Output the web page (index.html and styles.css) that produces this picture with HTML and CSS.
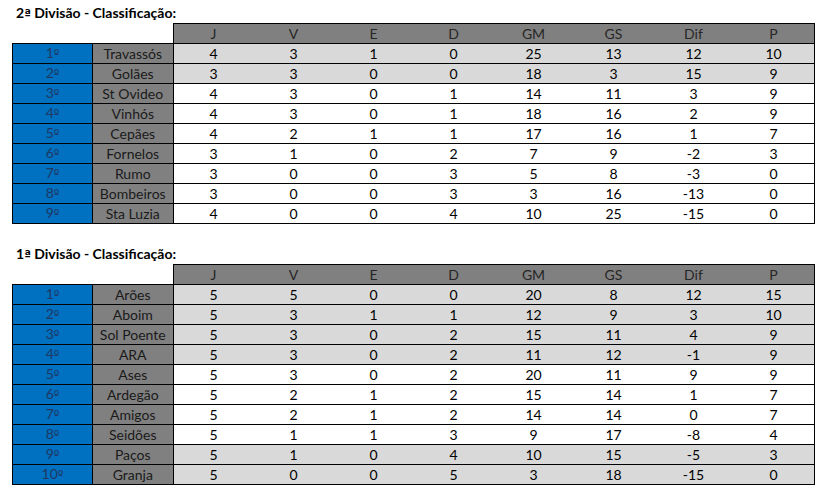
FILE: index.html
```html
<!DOCTYPE html>
<html>
<head>
<meta charset="utf-8">
<link rel="stylesheet" href="styles.css">
</head>
<body>
<div class="sheet">
  <div class="title">2<span class="ord">ª</span> Divisão - Classificação:</div>
  <table class="standings">
    <tr class="head"><td class="blank"></td><td class="blank"></td><td class="first">J</td><td>V</td><td>E</td><td>D</td><td>GM</td><td>GS</td><td>Dif</td><td class="last">P</td></tr>
    <tr class="grey top"><td class="pos">1<span class="ord">º</span></td><td class="name">Travassós</td><td>4</td><td>3</td><td>1</td><td>0</td><td>25</td><td>13</td><td>12</td><td class="last">10</td></tr>
    <tr class="grey"><td class="pos">2<span class="ord">º</span></td><td class="name">Golães</td><td>3</td><td>3</td><td>0</td><td>0</td><td>18</td><td>3</td><td>15</td><td class="last">9</td></tr>
    <tr><td class="pos">3<span class="ord">º</span></td><td class="name">St Ovideo</td><td>4</td><td>3</td><td>0</td><td>1</td><td>14</td><td>11</td><td>3</td><td class="last">9</td></tr>
    <tr><td class="pos">4<span class="ord">º</span></td><td class="name">Vinhós</td><td>4</td><td>3</td><td>0</td><td>1</td><td>18</td><td>16</td><td>2</td><td class="last">9</td></tr>
    <tr><td class="pos">5<span class="ord">º</span></td><td class="name">Cepães</td><td>4</td><td>2</td><td>1</td><td>1</td><td>17</td><td>16</td><td>1</td><td class="last">7</td></tr>
    <tr><td class="pos">6<span class="ord">º</span></td><td class="name">Fornelos</td><td>3</td><td>1</td><td>0</td><td>2</td><td>7</td><td>9</td><td>-2</td><td class="last">3</td></tr>
    <tr><td class="pos">7<span class="ord">º</span></td><td class="name">Rumo</td><td>3</td><td>0</td><td>0</td><td>3</td><td>5</td><td>8</td><td>-3</td><td class="last">0</td></tr>
    <tr><td class="pos">8<span class="ord">º</span></td><td class="name">Bombeiros</td><td>3</td><td>0</td><td>0</td><td>3</td><td>3</td><td>16</td><td>-13</td><td class="last">0</td></tr>
    <tr><td class="pos">9<span class="ord">º</span></td><td class="name">Sta Luzia</td><td>4</td><td>0</td><td>0</td><td>4</td><td>10</td><td>25</td><td>-15</td><td class="last">0</td></tr>
  </table>

  <div class="title second">1<span class="ord">ª</span> Divisão - Classificação:</div>
  <table class="standings">
    <tr class="head"><td class="blank"></td><td class="blank"></td><td class="first">J</td><td>V</td><td>E</td><td>D</td><td>GM</td><td>GS</td><td>Dif</td><td class="last">P</td></tr>
    <tr class="grey top"><td class="pos">1<span class="ord">º</span></td><td class="name">Arões</td><td>5</td><td>5</td><td>0</td><td>0</td><td>20</td><td>8</td><td>12</td><td class="last">15</td></tr>
    <tr class="grey"><td class="pos">2<span class="ord">º</span></td><td class="name">Aboim</td><td>5</td><td>3</td><td>1</td><td>1</td><td>12</td><td>9</td><td>3</td><td class="last">10</td></tr>
    <tr class="grey"><td class="pos">3<span class="ord">º</span></td><td class="name">Sol Poente</td><td>5</td><td>3</td><td>0</td><td>2</td><td>15</td><td>11</td><td>4</td><td class="last">9</td></tr>
    <tr class="grey"><td class="pos">4<span class="ord">º</span></td><td class="name">ARA</td><td>5</td><td>3</td><td>0</td><td>2</td><td>11</td><td>12</td><td>-1</td><td class="last">9</td></tr>
    <tr><td class="pos">5<span class="ord">º</span></td><td class="name">Ases</td><td>5</td><td>3</td><td>0</td><td>2</td><td>20</td><td>11</td><td>9</td><td class="last">9</td></tr>
    <tr><td class="pos">6<span class="ord">º</span></td><td class="name">Ardegão</td><td>5</td><td>2</td><td>1</td><td>2</td><td>15</td><td>14</td><td>1</td><td class="last">7</td></tr>
    <tr><td class="pos">7<span class="ord">º</span></td><td class="name">Amigos</td><td>5</td><td>2</td><td>1</td><td>2</td><td>14</td><td>14</td><td>0</td><td class="last">7</td></tr>
    <tr><td class="pos">8<span class="ord">º</span></td><td class="name">Seidões</td><td>5</td><td>1</td><td>1</td><td>3</td><td>9</td><td>17</td><td>-8</td><td class="last">4</td></tr>
    <tr class="grey"><td class="pos">9<span class="ord">º</span></td><td class="name">Paços</td><td>5</td><td>1</td><td>0</td><td>4</td><td>10</td><td>15</td><td>-5</td><td class="last">3</td></tr>
    <tr class="grey"><td class="pos">10<span class="ord">º</span></td><td class="name">Granja</td><td>5</td><td>0</td><td>0</td><td>5</td><td>3</td><td>18</td><td>-15</td><td class="last">0</td></tr>
  </table>
</div>
</body>
</html>
```

FILE: styles.css
```css
html, body {
  margin: 0;
  padding: 0;
  background: #ffffff;
}

.sheet {
  padding: 3px 0 0 12px;
  font-family: "Lato", "Open Sans", sans-serif;
  font-size: 14px;
  color: #000;
}

.ord {
  font-family: "DejaVu Sans", sans-serif;
  font-size: 0.85em;
}

.title {
  font-family: "Lato", "Open Sans", sans-serif;
  font-weight: bold;
  font-size: 14px;
  padding-left: 4px;
  height: 20px;
  line-height: 20px;
  color: #000;
}

.title.second {
  margin-top: 20px;
}

.standings {
  border-collapse: collapse;
  table-layout: fixed;
  width: 801px;
}

.standings td {
  width: 80px;
  height: 19px;
  padding: 0;
  text-align: center;
  line-height: 18px;
  border-bottom: 1px solid #000;
  background: #fff;
  white-space: nowrap;
  overflow: hidden;
}

.standings tr.grey td {
  background: #d9d9d9;
}

.standings tr.head td {
  background: #808080;
  color: #262626;
  border-top: 1px solid #000;
}

.standings tr.head td.blank {
  background: transparent;
  border: none;
}

.standings tr.head td.first {
  border-left: 1px solid #000;
}

.standings tr.top td.pos,
.standings tr.top td.name {
  border-top: 1px solid #000;
}

.standings td.last {
  border-right: 1px solid #000;
}

.standings tr td.pos {
  background: #0070c0;
  color: #1f3864;
  border-left: 1px solid #000;
  border-right: 1px solid #000;
}

.standings tr td.name {
  background: #808080;
  color: #1a1a1a;
  border-right: 1px solid #000;
}
```
